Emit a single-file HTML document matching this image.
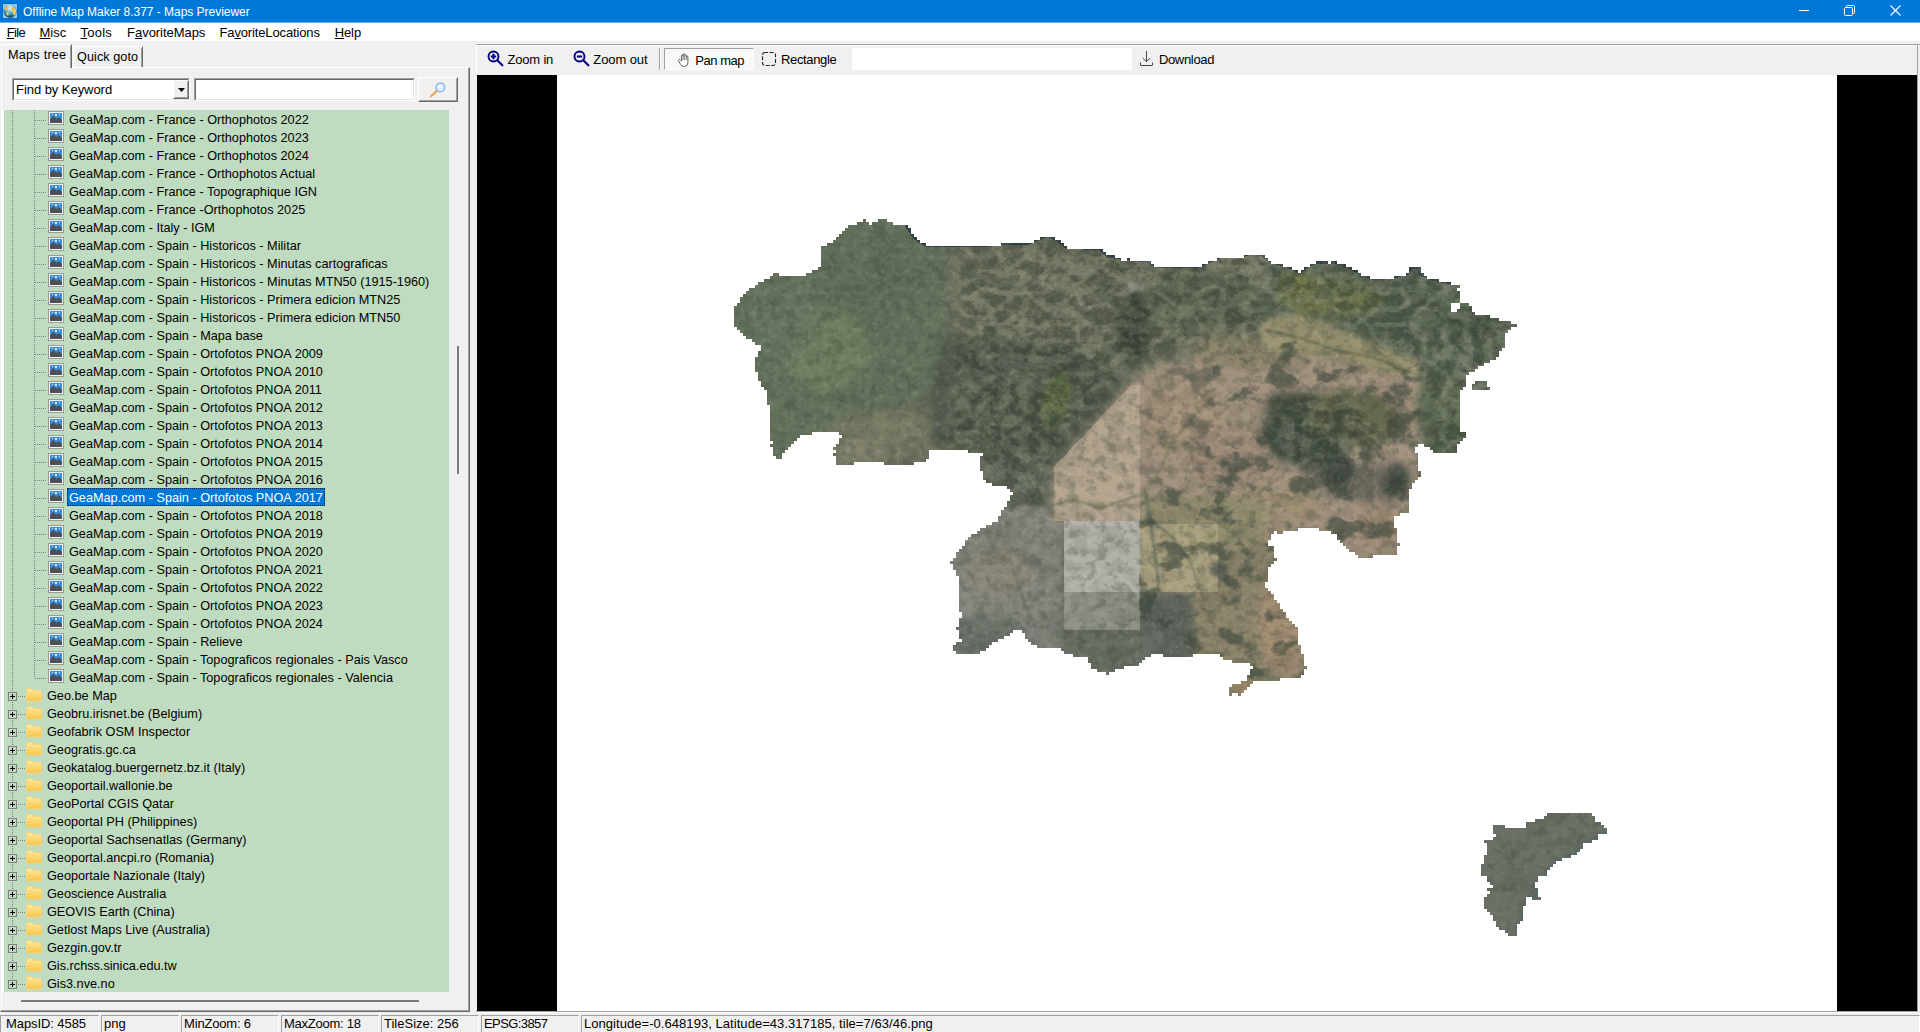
<!DOCTYPE html>
<html><head><meta charset="utf-8"><title>Offline Map Maker 8.377 - Maps Previewer</title>
<style>
*{box-sizing:border-box;margin:0;padding:0}
html,body{width:1920px;height:1032px;overflow:hidden;background:#f0f0f0;font-family:"Liberation Sans", sans-serif;font-size:13px;color:#000}
.abs,.abs *{position:absolute}
#title{position:absolute;left:0;top:0;width:1920px;height:22px;background:#0078d7}
#title .t{position:absolute;left:23px;top:5px;font-size:12px;line-height:14px;color:#fff;white-space:pre;letter-spacing:-0.03px}
#menu{position:absolute;left:0;top:22px;width:1920px;height:19px;background:#fff}
#menu span{position:absolute;top:3px;line-height:15px;font-size:13px;white-space:pre}
#menu u{text-decoration:underline;text-underline-offset:1px}
/* left tabbed pane */
#pane{position:absolute;left:0;top:67px;width:470px;height:945px;border-top:1px solid #fff;border-left:1px solid #f0f0f0;border-right:1px solid #696969;border-bottom:1px solid #696969;background:#f0f0f0}
#pane:before{content:"";position:absolute;left:0;top:0;width:1px;height:100%;background:#fff}
#pane:after{content:"";position:absolute;right:0;top:0;bottom:0;width:1px;background:#a0a0a0}
#paneb{position:absolute;left:1px;top:1010px;width:468px;height:1px;background:#a0a0a0}
.tab{position:absolute;background:#f0f0f0;border-top:1px solid #fff;border-left:1px solid #fff;border-right:1px solid #696969;white-space:pre}
.tab:after{content:"";position:absolute;right:0;top:1px;bottom:0;width:1px;background:#a0a0a0}
.tab span{position:absolute;line-height:15px;font-size:12.7px}
/* inputs */
.sunken{position:absolute;background:#fff;border:1px solid;border-color:#a0a0a0 #fff #fff #a0a0a0}
.sunken:before{content:"";position:absolute;left:0;top:0;right:0;bottom:0;border:1px solid;border-color:#696969 #e3e3e3 #e3e3e3 #696969}
.raised{position:absolute;background:#f0f0f0;border:1px solid;border-color:#fff #696969 #696969 #fff}
.raised:before{content:"";position:absolute;left:0;top:0;right:0;bottom:0;border:1px solid;border-color:#f0f0f0 #a0a0a0 #a0a0a0 #f0f0f0}
/* tree */
#treewrap{position:absolute;left:2px;top:110px;width:447px;height:882px;background:#fff}
#tree{position:absolute;left:4px;top:110px;width:445px;height:882px;background:#c0dcc0}
.row{position:absolute;left:0;width:449px;height:18px}
.row .tx{position:absolute;top:0;height:18px;line-height:21px;font-size:12.7px;white-space:pre;padding:0 2px;margin-left:-2px}
.row .tx.sel{background:#0078d7;color:#fff;outline:1px dotted #0c2238;outline-offset:-1px;padding:0 2px;margin-left:0}
.row .ic{position:absolute}
.hd{position:absolute;top:10px;height:1px;background-image:linear-gradient(90deg,#808080 50%,transparent 50%);background-size:2px 1px}
.vd{position:absolute;width:1px;background-image:linear-gradient(180deg,#808080 50%,transparent 50%);background-size:1px 2px}
.pm{position:absolute;left:8px;top:6px;width:9px;height:9px;border:1px solid #808080;background:#c0dcc0}
.pm:before{content:"";position:absolute;left:1px;top:3px;width:5px;height:1px;background:#000}
.pm:after{content:"";position:absolute;left:3px;top:1px;width:1px;height:5px;background:#000}
/* toolbar */
#tb{position:absolute;left:476px;top:44px;width:1444px;height:30px;border-top:1px solid #a0a0a0;border-left:1px solid #fff;background:#f0f0f0}
#tb:before{content:"";position:absolute;left:0;top:0;right:0;height:1px;background:#fff}
.tbt{position:absolute;top:53px;line-height:15px;font-size:13px;white-space:pre}
/* status bar */
.sp{position:absolute;top:1015px;height:17px;border-top:1px solid #a0a0a0;border-left:1px solid #a0a0a0;border-right:1px solid #fff;font-size:13px;line-height:15px;white-space:pre;padding-left:2px;padding-top:0px;letter-spacing:0.05px}
</style></head>
<body>

<svg width="0" height="0" style="position:absolute">
<defs>
 <linearGradient id="fg" x1="0" y1="0" x2="0" y2="1"><stop offset="0" stop-color="#fdeaa6"/><stop offset="1" stop-color="#f8c545"/></linearGradient>
 <g id="folder">
  <path d="M0.5 1.5 Q0.5 0.5 1.5 0.5 H6 L8 2.5 H14.5 Q15.5 2.5 15.5 3.5 V12 Q15.5 13 14.5 13 H1.5 Q0.5 13 0.5 12 Z" fill="url(#fg)" stroke="#f3d27a" stroke-width="1"/>
  <path d="M8 2.5 L6.5 4.5 H1" fill="none" stroke="#fbd97c" stroke-width="1"/>
 </g>
 <g id="imgic">
  <rect x="0" y="1" width="16" height="14" fill="#f4f4f4"/>
  <rect x="0.5" y="1.5" width="15" height="13" fill="none" stroke="#9a9a9a"/>
  <rect x="2" y="3" width="12" height="10" fill="#3b8edb"/>
  <path d="M2 13 V9 L5.5 6 L8.5 9 L10.5 7 L14 10 V13 Z" fill="#4d5054"/>
  <rect x="4" y="4" width="1" height="1" fill="#cfe6fa"/><rect x="7" y="4" width="2" height="2" fill="#cfe6fa"/><rect x="11" y="4" width="1" height="1" fill="#cfe6fa"/>
 </g>
</defs></svg>

<div id="title"><span class="t">Offline Map Maker 8.377 - Maps Previewer</span>
<svg style="position:absolute;left:2px;top:3px" width="16" height="16" viewBox="0 0 16 16">
 <defs><radialGradient id="gl" cx="50%" cy="28%" r="75%"><stop offset="0" stop-color="#e8f6fb"/><stop offset=".35" stop-color="#7cc3dc"/><stop offset=".8" stop-color="#1f6f8f"/><stop offset="1" stop-color="#174f6c"/></radialGradient></defs>
 <rect x="0" y="0" width="16" height="16" fill="#0d62d0"/>
 <rect x="1" y="1" width="14" height="14" fill="#8ccdf2"/>
 <circle cx="8" cy="8.2" r="6.6" fill="url(#gl)"/>
 <path d="M2.2 5.5 Q3.5 3 6 2.6 Q7.2 3.6 6.2 5 Q5.2 7.2 3.2 7.3 Q2 6.8 2.2 5.5Z" fill="#f3bd57"/>
 <path d="M9.3 5.2 Q11.5 3.6 13.4 5.6 Q14.6 8 13.8 10.8 Q12.6 13 11.6 12.4 Q11.4 10 10.2 8.6 Q9 6.8 9.3 5.2Z" fill="#f6cc5a"/>
 <path d="M10.6 5.6 Q12 5.2 12.6 6.2 L11.2 6.6Z" fill="#8f8a2e"/>
 <path d="M4.2 9.2 Q6.2 9 7 10.8 Q6.6 12.8 5.2 13 Q3.6 11.6 4.2 9.2Z" fill="#e6cf62"/>
 <path d="M6 2.4 Q8.5 1.6 10.4 3.2 Q9 4.4 7.4 4Z" fill="#dfe9c9" opacity=".9"/>
 <path d="M3 11.5 Q5 14.6 8.5 14.7 Q11.5 14.4 13 12 Q10.5 13 8 12.6 Q5.5 13.2 3 11.5Z" fill="#174a63" opacity=".7"/>
</svg>
<svg style="position:absolute;left:1798px;top:0" width="110" height="22" viewBox="0 0 110 22" fill="none" stroke="#fff" stroke-width="1">
 <path d="M1 10.5 H11"/>
 <rect x="46.5" y="7.5" width="8" height="8" rx="1"/>
 <path d="M48.5 7.5 V6.5 Q48.5 5.5 49.5 5.5 H55.5 Q56.5 5.5 56.5 6.5 V12.5 Q56.5 13.5 55.5 13.5 H54.5"/>
 <path d="M92.5 5.5 L102.5 15.5 M102.5 5.5 L92.5 15.5" stroke-width="1.1"/>
</svg>
</div>
<div id="menu"><span style="left:6.8px;letter-spacing:-0.70px"><u>F</u>ile</span><span style="left:39.5px;letter-spacing:0.00px"><u>M</u>isc</span><span style="left:80.5px;letter-spacing:0.22px"><u>T</u>ools</span><span style="left:127.1px;letter-spacing:-0.05px">F<u>a</u>voriteMaps</span><span style="left:219.5px;letter-spacing:-0.14px">Fa<u>v</u>oriteLocations</span><span style="left:334.7px;letter-spacing:-0.10px"><u>H</u>elp</span></div>
<div style="position:absolute;left:0;top:22px;width:1920px;height:1px;background:#6fb3e8"></div>

<!-- left pane -->
<div id="pane"></div>
<div id="paneb"></div>
<div class="tab" style="left:73px;top:46px;width:70px;height:21px"><span style="left:3px;top:3px;letter-spacing:0.05px">Quick goto</span></div>
<div class="tab" style="left:1px;top:44px;width:71px;height:24px;border-left-color:#fff"><span style="left:6px;top:3px;letter-spacing:0.22px">Maps tree</span></div>

<div class="sunken" style="left:12px;top:78px;width:178px;height:23px"></div>
<span style="position:absolute;left:16px;top:82px;line-height:15px;font-size:13px;white-space:pre;letter-spacing:-0.05px">Find by Keyword</span>
<div class="raised" style="left:173px;top:80px;width:16px;height:19px"></div>
<svg style="position:absolute;left:178px;top:88px" width="7" height="4"><path d="M0 0 H7 L3.5 4Z" fill="#000"/></svg>
<div class="sunken" style="left:194px;top:78px;width:221px;height:23px"></div>
<div class="raised" style="left:418px;top:77px;width:40px;height:25px"></div>
<svg style="position:absolute;left:428px;top:80px" width="20" height="20" viewBox="0 0 20 20">
 <path d="M9.2 10.6 L3 16.3" stroke="#e9a45a" stroke-width="2.2" stroke-linecap="round"/>
 <circle cx="12.4" cy="7.4" r="4.3" fill="#d8efff" stroke="#8ab4e8" stroke-width="1.4"/>
 <circle cx="11.5" cy="6.4" r="1.8" fill="#fff" opacity=".8"/>
</svg>

<div id="treewrap"></div>
<div id="tree"></div>
<i class="vd" style="left:12px;top:110px;height:873px"></i>
<i class="vd" style="left:34px;top:110px;height:568px"></i>
<div class="row" style="top:110px"><i class="hd" style="left:35px;width:12px"></i><svg class="ic" style="left:48px;top:0px" width="16" height="15"><use href="#imgic"/></svg><span class="tx" style="left:69px">GeaMap.com - France - Orthophotos 2022</span></div>
<div class="row" style="top:128px"><i class="hd" style="left:35px;width:12px"></i><svg class="ic" style="left:48px;top:0px" width="16" height="15"><use href="#imgic"/></svg><span class="tx" style="left:69px">GeaMap.com - France - Orthophotos 2023</span></div>
<div class="row" style="top:146px"><i class="hd" style="left:35px;width:12px"></i><svg class="ic" style="left:48px;top:0px" width="16" height="15"><use href="#imgic"/></svg><span class="tx" style="left:69px">GeaMap.com - France - Orthophotos 2024</span></div>
<div class="row" style="top:164px"><i class="hd" style="left:35px;width:12px"></i><svg class="ic" style="left:48px;top:0px" width="16" height="15"><use href="#imgic"/></svg><span class="tx" style="left:69px">GeaMap.com - France - Orthophotos Actual</span></div>
<div class="row" style="top:182px"><i class="hd" style="left:35px;width:12px"></i><svg class="ic" style="left:48px;top:0px" width="16" height="15"><use href="#imgic"/></svg><span class="tx" style="left:69px">GeaMap.com - France - Topographique IGN</span></div>
<div class="row" style="top:200px"><i class="hd" style="left:35px;width:12px"></i><svg class="ic" style="left:48px;top:0px" width="16" height="15"><use href="#imgic"/></svg><span class="tx" style="left:69px">GeaMap.com - France -Orthophotos 2025</span></div>
<div class="row" style="top:218px"><i class="hd" style="left:35px;width:12px"></i><svg class="ic" style="left:48px;top:0px" width="16" height="15"><use href="#imgic"/></svg><span class="tx" style="left:69px">GeaMap.com - Italy - IGM</span></div>
<div class="row" style="top:236px"><i class="hd" style="left:35px;width:12px"></i><svg class="ic" style="left:48px;top:0px" width="16" height="15"><use href="#imgic"/></svg><span class="tx" style="left:69px">GeaMap.com - Spain - Historicos - Militar</span></div>
<div class="row" style="top:254px"><i class="hd" style="left:35px;width:12px"></i><svg class="ic" style="left:48px;top:0px" width="16" height="15"><use href="#imgic"/></svg><span class="tx" style="left:69px">GeaMap.com - Spain - Historicos - Minutas cartograficas</span></div>
<div class="row" style="top:272px"><i class="hd" style="left:35px;width:12px"></i><svg class="ic" style="left:48px;top:0px" width="16" height="15"><use href="#imgic"/></svg><span class="tx" style="left:69px">GeaMap.com - Spain - Historicos - Minutas MTN50 (1915-1960)</span></div>
<div class="row" style="top:290px"><i class="hd" style="left:35px;width:12px"></i><svg class="ic" style="left:48px;top:0px" width="16" height="15"><use href="#imgic"/></svg><span class="tx" style="left:69px">GeaMap.com - Spain - Historicos - Primera edicion MTN25</span></div>
<div class="row" style="top:308px"><i class="hd" style="left:35px;width:12px"></i><svg class="ic" style="left:48px;top:0px" width="16" height="15"><use href="#imgic"/></svg><span class="tx" style="left:69px">GeaMap.com - Spain - Historicos - Primera edicion MTN50</span></div>
<div class="row" style="top:326px"><i class="hd" style="left:35px;width:12px"></i><svg class="ic" style="left:48px;top:0px" width="16" height="15"><use href="#imgic"/></svg><span class="tx" style="left:69px">GeaMap.com - Spain - Mapa base</span></div>
<div class="row" style="top:344px"><i class="hd" style="left:35px;width:12px"></i><svg class="ic" style="left:48px;top:0px" width="16" height="15"><use href="#imgic"/></svg><span class="tx" style="left:69px">GeaMap.com - Spain - Ortofotos PNOA 2009</span></div>
<div class="row" style="top:362px"><i class="hd" style="left:35px;width:12px"></i><svg class="ic" style="left:48px;top:0px" width="16" height="15"><use href="#imgic"/></svg><span class="tx" style="left:69px">GeaMap.com - Spain - Ortofotos PNOA 2010</span></div>
<div class="row" style="top:380px"><i class="hd" style="left:35px;width:12px"></i><svg class="ic" style="left:48px;top:0px" width="16" height="15"><use href="#imgic"/></svg><span class="tx" style="left:69px">GeaMap.com - Spain - Ortofotos PNOA 2011</span></div>
<div class="row" style="top:398px"><i class="hd" style="left:35px;width:12px"></i><svg class="ic" style="left:48px;top:0px" width="16" height="15"><use href="#imgic"/></svg><span class="tx" style="left:69px">GeaMap.com - Spain - Ortofotos PNOA 2012</span></div>
<div class="row" style="top:416px"><i class="hd" style="left:35px;width:12px"></i><svg class="ic" style="left:48px;top:0px" width="16" height="15"><use href="#imgic"/></svg><span class="tx" style="left:69px">GeaMap.com - Spain - Ortofotos PNOA 2013</span></div>
<div class="row" style="top:434px"><i class="hd" style="left:35px;width:12px"></i><svg class="ic" style="left:48px;top:0px" width="16" height="15"><use href="#imgic"/></svg><span class="tx" style="left:69px">GeaMap.com - Spain - Ortofotos PNOA 2014</span></div>
<div class="row" style="top:452px"><i class="hd" style="left:35px;width:12px"></i><svg class="ic" style="left:48px;top:0px" width="16" height="15"><use href="#imgic"/></svg><span class="tx" style="left:69px">GeaMap.com - Spain - Ortofotos PNOA 2015</span></div>
<div class="row" style="top:470px"><i class="hd" style="left:35px;width:12px"></i><svg class="ic" style="left:48px;top:0px" width="16" height="15"><use href="#imgic"/></svg><span class="tx" style="left:69px">GeaMap.com - Spain - Ortofotos PNOA 2016</span></div>
<div class="row" style="top:488px"><i class="hd" style="left:35px;width:12px"></i><svg class="ic" style="left:48px;top:0px" width="16" height="15"><use href="#imgic"/></svg><span class="tx sel" style="left:67px">GeaMap.com - Spain - Ortofotos PNOA 2017</span></div>
<div class="row" style="top:506px"><i class="hd" style="left:35px;width:12px"></i><svg class="ic" style="left:48px;top:0px" width="16" height="15"><use href="#imgic"/></svg><span class="tx" style="left:69px">GeaMap.com - Spain - Ortofotos PNOA 2018</span></div>
<div class="row" style="top:524px"><i class="hd" style="left:35px;width:12px"></i><svg class="ic" style="left:48px;top:0px" width="16" height="15"><use href="#imgic"/></svg><span class="tx" style="left:69px">GeaMap.com - Spain - Ortofotos PNOA 2019</span></div>
<div class="row" style="top:542px"><i class="hd" style="left:35px;width:12px"></i><svg class="ic" style="left:48px;top:0px" width="16" height="15"><use href="#imgic"/></svg><span class="tx" style="left:69px">GeaMap.com - Spain - Ortofotos PNOA 2020</span></div>
<div class="row" style="top:560px"><i class="hd" style="left:35px;width:12px"></i><svg class="ic" style="left:48px;top:0px" width="16" height="15"><use href="#imgic"/></svg><span class="tx" style="left:69px">GeaMap.com - Spain - Ortofotos PNOA 2021</span></div>
<div class="row" style="top:578px"><i class="hd" style="left:35px;width:12px"></i><svg class="ic" style="left:48px;top:0px" width="16" height="15"><use href="#imgic"/></svg><span class="tx" style="left:69px">GeaMap.com - Spain - Ortofotos PNOA 2022</span></div>
<div class="row" style="top:596px"><i class="hd" style="left:35px;width:12px"></i><svg class="ic" style="left:48px;top:0px" width="16" height="15"><use href="#imgic"/></svg><span class="tx" style="left:69px">GeaMap.com - Spain - Ortofotos PNOA 2023</span></div>
<div class="row" style="top:614px"><i class="hd" style="left:35px;width:12px"></i><svg class="ic" style="left:48px;top:0px" width="16" height="15"><use href="#imgic"/></svg><span class="tx" style="left:69px">GeaMap.com - Spain - Ortofotos PNOA 2024</span></div>
<div class="row" style="top:632px"><i class="hd" style="left:35px;width:12px"></i><svg class="ic" style="left:48px;top:0px" width="16" height="15"><use href="#imgic"/></svg><span class="tx" style="left:69px">GeaMap.com - Spain - Relieve</span></div>
<div class="row" style="top:650px"><i class="hd" style="left:35px;width:12px"></i><svg class="ic" style="left:48px;top:0px" width="16" height="15"><use href="#imgic"/></svg><span class="tx" style="left:69px">GeaMap.com - Spain - Topograficos regionales - Pais Vasco</span></div>
<div class="row" style="top:668px"><i class="hd" style="left:35px;width:12px"></i><svg class="ic" style="left:48px;top:0px" width="16" height="15"><use href="#imgic"/></svg><span class="tx" style="left:69px">GeaMap.com - Spain - Topograficos regionales - Valencia</span></div>
<div class="row" style="top:686px"><i class="hd" style="left:18px;width:8px"></i><i class="pm"></i><svg class="ic" style="left:26px;top:2px" width="16" height="14"><use href="#folder"/></svg><span class="tx" style="left:47px">Geo.be Map</span></div>
<div class="row" style="top:704px"><i class="hd" style="left:18px;width:8px"></i><i class="pm"></i><svg class="ic" style="left:26px;top:2px" width="16" height="14"><use href="#folder"/></svg><span class="tx" style="left:47px">Geobru.irisnet.be (Belgium)</span></div>
<div class="row" style="top:722px"><i class="hd" style="left:18px;width:8px"></i><i class="pm"></i><svg class="ic" style="left:26px;top:2px" width="16" height="14"><use href="#folder"/></svg><span class="tx" style="left:47px">Geofabrik OSM Inspector</span></div>
<div class="row" style="top:740px"><i class="hd" style="left:18px;width:8px"></i><i class="pm"></i><svg class="ic" style="left:26px;top:2px" width="16" height="14"><use href="#folder"/></svg><span class="tx" style="left:47px">Geogratis.gc.ca</span></div>
<div class="row" style="top:758px"><i class="hd" style="left:18px;width:8px"></i><i class="pm"></i><svg class="ic" style="left:26px;top:2px" width="16" height="14"><use href="#folder"/></svg><span class="tx" style="left:47px">Geokatalog.buergernetz.bz.it (Italy)</span></div>
<div class="row" style="top:776px"><i class="hd" style="left:18px;width:8px"></i><i class="pm"></i><svg class="ic" style="left:26px;top:2px" width="16" height="14"><use href="#folder"/></svg><span class="tx" style="left:47px">Geoportail.wallonie.be</span></div>
<div class="row" style="top:794px"><i class="hd" style="left:18px;width:8px"></i><i class="pm"></i><svg class="ic" style="left:26px;top:2px" width="16" height="14"><use href="#folder"/></svg><span class="tx" style="left:47px">GeoPortal CGIS Qatar</span></div>
<div class="row" style="top:812px"><i class="hd" style="left:18px;width:8px"></i><i class="pm"></i><svg class="ic" style="left:26px;top:2px" width="16" height="14"><use href="#folder"/></svg><span class="tx" style="left:47px">Geoportal PH (Philippines)</span></div>
<div class="row" style="top:830px"><i class="hd" style="left:18px;width:8px"></i><i class="pm"></i><svg class="ic" style="left:26px;top:2px" width="16" height="14"><use href="#folder"/></svg><span class="tx" style="left:47px">Geoportal Sachsenatlas (Germany)</span></div>
<div class="row" style="top:848px"><i class="hd" style="left:18px;width:8px"></i><i class="pm"></i><svg class="ic" style="left:26px;top:2px" width="16" height="14"><use href="#folder"/></svg><span class="tx" style="left:47px">Geoportal.ancpi.ro (Romania)</span></div>
<div class="row" style="top:866px"><i class="hd" style="left:18px;width:8px"></i><i class="pm"></i><svg class="ic" style="left:26px;top:2px" width="16" height="14"><use href="#folder"/></svg><span class="tx" style="left:47px">Geoportale Nazionale (Italy)</span></div>
<div class="row" style="top:884px"><i class="hd" style="left:18px;width:8px"></i><i class="pm"></i><svg class="ic" style="left:26px;top:2px" width="16" height="14"><use href="#folder"/></svg><span class="tx" style="left:47px">Geoscience Australia</span></div>
<div class="row" style="top:902px"><i class="hd" style="left:18px;width:8px"></i><i class="pm"></i><svg class="ic" style="left:26px;top:2px" width="16" height="14"><use href="#folder"/></svg><span class="tx" style="left:47px">GEOVIS Earth (China)</span></div>
<div class="row" style="top:920px"><i class="hd" style="left:18px;width:8px"></i><i class="pm"></i><svg class="ic" style="left:26px;top:2px" width="16" height="14"><use href="#folder"/></svg><span class="tx" style="left:47px">Getlost Maps Live (Australia)</span></div>
<div class="row" style="top:938px"><i class="hd" style="left:18px;width:8px"></i><i class="pm"></i><svg class="ic" style="left:26px;top:2px" width="16" height="14"><use href="#folder"/></svg><span class="tx" style="left:47px">Gezgin.gov.tr</span></div>
<div class="row" style="top:956px"><i class="hd" style="left:18px;width:8px"></i><i class="pm"></i><svg class="ic" style="left:26px;top:2px" width="16" height="14"><use href="#folder"/></svg><span class="tx" style="left:47px">Gis.rchss.sinica.edu.tw</span></div>
<div class="row" style="top:974px"><i class="hd" style="left:18px;width:8px"></i><i class="pm"></i><svg class="ic" style="left:26px;top:2px" width="16" height="14"><use href="#folder"/></svg><span class="tx" style="left:47px">Gis3.nve.no</span></div>
<!-- scrollbars -->
<div style="position:absolute;left:457px;top:346px;width:2px;height:128px;background:#7a7a7a"></div>
<div style="position:absolute;left:21px;top:1000px;width:398px;height:2px;background:#7a7a7a"></div>

<!-- toolbar -->
<div id="tb"></div>

<!-- zoom in -->
<svg style="position:absolute;left:487px;top:50px" width="18" height="18" viewBox="0 0 18 18"><circle cx="6.5" cy="6.5" r="5" fill="none" stroke="#000080" stroke-width="1.9"/><path d="M10.3 10.3 L15.3 15.3" stroke="#000080" stroke-width="2.2" stroke-linecap="round"/><path d="M3.8 6.5 H9.2 M6.5 3.8 V9.2" stroke="#000080" stroke-width="2.1"/></svg>
<!-- zoom out -->
<svg style="position:absolute;left:573px;top:50px" width="18" height="18" viewBox="0 0 18 18"><circle cx="6.5" cy="6.5" r="5" fill="none" stroke="#000080" stroke-width="1.9"/><path d="M10.3 10.3 L15.3 15.3" stroke="#000080" stroke-width="2.2" stroke-linecap="round"/><path d="M3.8 6.5 H9.2" stroke="#000080" stroke-width="2.1"/></svg>
<!-- separator -->
<div style="position:absolute;left:659px;top:48px;width:1px;height:22px;background:#a0a0a0"></div>
<div style="position:absolute;left:660px;top:48px;width:1px;height:22px;background:#fff"></div>
<!-- pan map pressed -->
<div style="position:absolute;left:664px;top:48px;width:90px;height:22px;background:#f8f8f8;border:1px solid;border-color:#a0a0a0 #fff #fff #a0a0a0"></div>
<svg style="position:absolute;left:677px;top:53px" width="14" height="15" viewBox="0 0 14 15"><path d="M4.5 8 V3 Q4.5 2 5.3 2 Q6.1 2 6.1 3 V1.8 Q6.1 0.8 6.9 0.8 Q7.7 0.8 7.7 1.8 V2.6 Q7.7 1.6 8.5 1.6 Q9.3 1.6 9.3 2.6 V3.8 Q9.3 2.9 10.1 2.9 Q10.9 2.9 10.9 3.9 V9.5 Q10.9 13.5 7.6 13.5 H6.8 Q5 13.5 3.8 11.5 L1.6 8 Q1.2 7 2 6.6 Q2.8 6.3 3.4 7.2 Z" fill="#fff" stroke="#555" stroke-width="0.9" stroke-linejoin="round"/><path d="M6.1 3 V7 M7.7 2.6 V7 M9.3 3.8 V7" stroke="#555" stroke-width="0.8" fill="none"/></svg>
<!-- rectangle -->
<svg style="position:absolute;left:761px;top:51px" width="16" height="16" viewBox="0 0 16 16"><rect x="1.5" y="1.5" width="13" height="13" rx="2.5" fill="none" stroke="#222" stroke-width="1.1" stroke-dasharray="4 1.6" stroke-dashoffset="1"/></svg>
<!-- white box -->
<div style="position:absolute;left:852px;top:48px;width:280px;height:22px;background:#fff"></div>
<!-- download -->
<svg style="position:absolute;left:1139px;top:50px" width="16" height="17" viewBox="0 0 16 17"><path d="M7.5 1 V11.5 M3.8 8 L7.5 11.7 L11.2 8" fill="none" stroke="#444" stroke-width="1"/><path d="M1.5 12.5 V15 Q1.5 15.5 2 15.5 H13 Q13.5 15.5 13.5 15 V12.5" fill="none" stroke="#444" stroke-width="1"/></svg>

<span class="tbt" style="left:507.4px;top:52px;letter-spacing:-0.17px">Zoom in</span><span class="tbt" style="left:593.3px;top:52px;letter-spacing:-0.09px">Zoom out</span><span class="tbt" style="left:695.2px;top:53px;letter-spacing:-0.44px">Pan map</span><span class="tbt" style="left:781.1px;top:52px;letter-spacing:-0.37px">Rectangle</span><span class="tbt" style="left:1158.9px;top:52px;letter-spacing:-0.32px">Download</span>

<!-- map view -->
<div style="position:absolute;left:477px;top:75px;width:1440px;height:936px;background:#000"></div>
<div style="position:absolute;left:557px;top:75px;width:1280px;height:936px;background:#fff"></div>
<div style="position:absolute;left:1917px;top:44px;width:1px;height:968px;background:#a0a0a0"></div>
<div style="position:absolute;left:476px;top:1011px;width:1442px;height:1px;background:#a0a0a0"></div>
<div style="position:absolute;left:476px;top:1012px;width:1442px;height:1px;background:#fff"></div>
<svg style="position:absolute;left:557px;top:75px" width="1280" height="936" viewBox="0 0 1280 936" shape-rendering="crispEdges">
<defs>
<clipPath id="land"><rect x="306" y="144" width="3" height="3"/><rect x="321" y="144" width="9" height="3"/><rect x="300" y="147" width="12" height="3"/><rect x="315" y="147" width="21" height="3"/><rect x="291" y="150" width="60" height="3"/><rect x="288" y="153" width="66" height="3"/><rect x="285" y="156" width="69" height="3"/><rect x="282" y="159" width="75" height="3"/><rect x="489" y="159" width="0" height="3"/><rect x="279" y="162" width="81" height="3"/><rect x="483" y="162" width="15" height="3"/><rect x="276" y="165" width="87" height="3"/><rect x="477" y="165" width="27" height="3"/><rect x="267" y="168" width="0" height="3"/><rect x="270" y="168" width="0" height="3"/><rect x="270" y="168" width="99" height="3"/><rect x="444" y="168" width="0" height="3"/><rect x="444" y="168" width="0" height="3"/><rect x="444" y="168" width="0" height="3"/><rect x="444" y="168" width="0" height="3"/><rect x="444" y="168" width="60" height="3"/><rect x="504" y="168" width="3" height="3"/><rect x="264" y="171" width="246" height="3"/><rect x="513" y="171" width="0" height="3"/><rect x="522" y="171" width="0" height="3"/><rect x="264" y="174" width="282" height="3"/><rect x="264" y="177" width="285" height="3"/><rect x="264" y="180" width="294" height="3"/><rect x="684" y="180" width="0" height="3"/><rect x="687" y="180" width="21" height="3"/><rect x="264" y="183" width="300" height="3"/><rect x="564" y="183" width="0" height="3"/><rect x="570" y="183" width="0" height="3"/><rect x="570" y="183" width="3" height="3"/><rect x="660" y="183" width="51" height="3"/><rect x="264" y="186" width="330" height="3"/><rect x="651" y="186" width="63" height="3"/><rect x="756" y="186" width="0" height="3"/><rect x="756" y="186" width="0" height="3"/><rect x="759" y="186" width="0" height="3"/><rect x="759" y="186" width="12" height="3"/><rect x="774" y="186" width="6" height="3"/><rect x="264" y="189" width="333" height="3"/><rect x="645" y="189" width="81" height="3"/><rect x="753" y="189" width="36" height="3"/><rect x="261" y="192" width="474" height="3"/><rect x="747" y="192" width="48" height="3"/><rect x="852" y="192" width="0" height="3"/><rect x="852" y="192" width="3" height="3"/><rect x="855" y="192" width="9" height="3"/><rect x="255" y="195" width="486" height="3"/><rect x="744" y="195" width="57" height="3"/><rect x="852" y="195" width="12" height="3"/><rect x="216" y="198" width="6" height="3"/><rect x="246" y="198" width="0" height="3"/><rect x="249" y="198" width="555" height="3"/><rect x="846" y="198" width="0" height="3"/><rect x="849" y="198" width="18" height="3"/><rect x="210" y="201" width="0" height="3"/><rect x="210" y="201" width="0" height="3"/><rect x="213" y="201" width="600" height="3"/><rect x="837" y="201" width="33" height="3"/><rect x="204" y="204" width="0" height="3"/><rect x="207" y="204" width="672" height="3"/><rect x="879" y="204" width="3" height="3"/><rect x="201" y="207" width="693" height="3"/><rect x="198" y="210" width="702" height="3"/><rect x="900" y="210" width="3" height="3"/><rect x="192" y="213" width="708" height="3"/><rect x="189" y="216" width="714" height="3"/><rect x="186" y="219" width="717" height="3"/><rect x="183" y="222" width="720" height="3"/><rect x="183" y="225" width="720" height="3"/><rect x="180" y="228" width="714" height="3"/><rect x="903" y="228" width="9" height="3"/><rect x="912" y="228" width="0" height="3"/><rect x="177" y="231" width="717" height="3"/><rect x="903" y="231" width="9" height="3"/><rect x="912" y="231" width="3" height="3"/><rect x="177" y="234" width="717" height="3"/><rect x="894" y="234" width="0" height="3"/><rect x="894" y="234" width="0" height="3"/><rect x="900" y="234" width="15" height="3"/><rect x="177" y="237" width="741" height="3"/><rect x="177" y="240" width="750" height="3"/><rect x="927" y="240" width="3" height="3"/><rect x="930" y="240" width="3" height="3"/><rect x="177" y="243" width="765" height="3"/><rect x="177" y="246" width="774" height="3"/><rect x="951" y="246" width="3" height="3"/><rect x="177" y="249" width="783" height="3"/><rect x="180" y="252" width="774" height="3"/><rect x="180" y="255" width="0" height="3"/><rect x="180" y="255" width="0" height="3"/><rect x="183" y="255" width="768" height="3"/><rect x="186" y="258" width="762" height="3"/><rect x="189" y="261" width="759" height="3"/><rect x="195" y="264" width="753" height="3"/><rect x="198" y="267" width="750" height="3"/><rect x="204" y="270" width="744" height="3"/><rect x="201" y="273" width="0" height="3"/><rect x="204" y="273" width="741" height="3"/><rect x="201" y="276" width="741" height="3"/><rect x="201" y="279" width="741" height="3"/><rect x="198" y="282" width="738" height="3"/><rect x="936" y="282" width="3" height="3"/><rect x="198" y="285" width="735" height="3"/><rect x="198" y="288" width="729" height="3"/><rect x="198" y="291" width="723" height="3"/><rect x="198" y="294" width="0" height="3"/><rect x="198" y="294" width="720" height="3"/><rect x="201" y="297" width="711" height="3"/><rect x="912" y="297" width="0" height="3"/><rect x="201" y="300" width="708" height="3"/><rect x="201" y="303" width="708" height="3"/><rect x="204" y="306" width="705" height="3"/><rect x="918" y="306" width="9" height="3"/><rect x="927" y="306" width="0" height="3"/><rect x="927" y="306" width="3" height="3"/><rect x="204" y="309" width="705" height="3"/><rect x="915" y="309" width="15" height="3"/><rect x="207" y="312" width="699" height="3"/><rect x="915" y="312" width="18" height="3"/><rect x="210" y="315" width="693" height="3"/><rect x="210" y="318" width="693" height="3"/><rect x="210" y="321" width="690" height="3"/><rect x="900" y="321" width="3" height="3"/><rect x="210" y="324" width="693" height="3"/><rect x="210" y="327" width="693" height="3"/><rect x="213" y="330" width="690" height="3"/><rect x="213" y="333" width="690" height="3"/><rect x="213" y="336" width="690" height="3"/><rect x="210" y="339" width="0" height="3"/><rect x="213" y="339" width="690" height="3"/><rect x="213" y="342" width="690" height="3"/><rect x="213" y="345" width="690" height="3"/><rect x="213" y="348" width="690" height="3"/><rect x="213" y="351" width="687" height="3"/><rect x="900" y="351" width="3" height="3"/><rect x="213" y="354" width="690" height="3"/><rect x="213" y="357" width="42" height="3"/><rect x="282" y="357" width="627" height="3"/><rect x="213" y="360" width="30" height="3"/><rect x="285" y="360" width="624" height="3"/><rect x="213" y="363" width="27" height="3"/><rect x="282" y="363" width="624" height="3"/><rect x="216" y="366" width="21" height="3"/><rect x="282" y="366" width="621" height="3"/><rect x="213" y="369" width="21" height="3"/><rect x="279" y="369" width="582" height="3"/><rect x="867" y="369" width="33" height="3"/><rect x="216" y="372" width="15" height="3"/><rect x="276" y="372" width="108" height="3"/><rect x="384" y="372" width="474" height="3"/><rect x="873" y="372" width="27" height="3"/><rect x="216" y="375" width="12" height="3"/><rect x="279" y="375" width="93" height="3"/><rect x="405" y="375" width="0" height="3"/><rect x="411" y="375" width="6" height="3"/><rect x="417" y="375" width="441" height="3"/><rect x="876" y="375" width="24" height="3"/><rect x="213" y="378" width="0" height="3"/><rect x="216" y="378" width="9" height="3"/><rect x="225" y="378" width="0" height="3"/><rect x="276" y="378" width="96" height="3"/><rect x="426" y="378" width="435" height="3"/><rect x="219" y="381" width="6" height="3"/><rect x="279" y="381" width="93" height="3"/><rect x="423" y="381" width="0" height="3"/><rect x="423" y="381" width="438" height="3"/><rect x="279" y="384" width="87" height="3"/><rect x="366" y="384" width="0" height="3"/><rect x="366" y="384" width="3" height="3"/><rect x="423" y="384" width="438" height="3"/><rect x="279" y="387" width="18" height="3"/><rect x="297" y="387" width="0" height="3"/><rect x="327" y="387" width="3" height="3"/><rect x="330" y="387" width="27" height="3"/><rect x="423" y="387" width="438" height="3"/><rect x="423" y="390" width="438" height="3"/><rect x="423" y="393" width="438" height="3"/><rect x="423" y="396" width="0" height="3"/><rect x="426" y="396" width="438" height="3"/><rect x="426" y="399" width="438" height="3"/><rect x="426" y="402" width="435" height="3"/><rect x="429" y="405" width="429" height="3"/><rect x="435" y="408" width="0" height="3"/><rect x="435" y="408" width="6" height="3"/><rect x="441" y="408" width="414" height="3"/><rect x="450" y="411" width="405" height="3"/><rect x="453" y="414" width="399" height="3"/><rect x="456" y="417" width="396" height="3"/><rect x="453" y="420" width="399" height="3"/><rect x="453" y="423" width="399" height="3"/><rect x="450" y="426" width="402" height="3"/><rect x="450" y="429" width="402" height="3"/><rect x="447" y="432" width="405" height="3"/><rect x="444" y="435" width="408" height="3"/><rect x="444" y="438" width="393" height="3"/><rect x="837" y="438" width="6" height="3"/><rect x="441" y="441" width="396" height="3"/><rect x="441" y="444" width="396" height="3"/><rect x="435" y="447" width="402" height="3"/><rect x="429" y="450" width="408" height="3"/><rect x="423" y="453" width="318" height="3"/><rect x="741" y="453" width="0" height="3"/><rect x="753" y="453" width="0" height="3"/><rect x="762" y="453" width="0" height="3"/><rect x="762" y="453" width="75" height="3"/><rect x="837" y="453" width="3" height="3"/><rect x="420" y="456" width="297" height="3"/><rect x="717" y="456" width="0" height="3"/><rect x="720" y="456" width="6" height="3"/><rect x="774" y="456" width="66" height="3"/><rect x="414" y="459" width="300" height="3"/><rect x="780" y="459" width="60" height="3"/><rect x="411" y="462" width="303" height="3"/><rect x="780" y="462" width="60" height="3"/><rect x="408" y="465" width="303" height="3"/><rect x="783" y="465" width="57" height="3"/><rect x="408" y="468" width="303" height="3"/><rect x="786" y="468" width="57" height="3"/><rect x="405" y="471" width="312" height="3"/><rect x="789" y="471" width="51" height="3"/><rect x="402" y="474" width="315" height="3"/><rect x="792" y="474" width="48" height="3"/><rect x="399" y="477" width="318" height="3"/><rect x="798" y="477" width="42" height="3"/><rect x="399" y="480" width="318" height="3"/><rect x="801" y="480" width="15" height="3"/><rect x="396" y="483" width="321" height="3"/><rect x="717" y="483" width="3" height="3"/><rect x="393" y="486" width="324" height="3"/><rect x="717" y="486" width="0" height="3"/><rect x="717" y="486" width="0" height="3"/><rect x="396" y="489" width="318" height="3"/><rect x="396" y="492" width="315" height="3"/><rect x="399" y="495" width="312" height="3"/><rect x="399" y="498" width="312" height="3"/><rect x="402" y="501" width="306" height="3"/><rect x="708" y="501" width="3" height="3"/><rect x="402" y="504" width="309" height="3"/><rect x="402" y="507" width="306" height="3"/><rect x="708" y="507" width="0" height="3"/><rect x="402" y="510" width="306" height="3"/><rect x="708" y="510" width="0" height="3"/><rect x="708" y="510" width="0" height="3"/><rect x="402" y="513" width="309" height="3"/><rect x="402" y="516" width="312" height="3"/><rect x="402" y="519" width="315" height="3"/><rect x="402" y="522" width="315" height="3"/><rect x="402" y="525" width="318" height="3"/><rect x="402" y="528" width="321" height="3"/><rect x="402" y="531" width="321" height="3"/><rect x="402" y="534" width="324" height="3"/><rect x="402" y="537" width="0" height="3"/><rect x="405" y="537" width="324" height="3"/><rect x="405" y="540" width="324" height="3"/><rect x="402" y="543" width="330" height="3"/><rect x="402" y="546" width="333" height="3"/><rect x="402" y="549" width="336" height="3"/><rect x="399" y="552" width="342" height="3"/><rect x="402" y="555" width="54" height="3"/><rect x="465" y="555" width="276" height="3"/><rect x="402" y="558" width="51" height="3"/><rect x="468" y="558" width="273" height="3"/><rect x="402" y="561" width="45" height="3"/><rect x="468" y="561" width="273" height="3"/><rect x="402" y="564" width="0" height="3"/><rect x="405" y="564" width="36" height="3"/><rect x="471" y="564" width="270" height="3"/><rect x="741" y="564" width="0" height="3"/><rect x="399" y="567" width="36" height="3"/><rect x="474" y="567" width="267" height="3"/><rect x="396" y="570" width="36" height="3"/><rect x="480" y="570" width="264" height="3"/><rect x="396" y="573" width="33" height="3"/><rect x="504" y="573" width="240" height="3"/><rect x="399" y="576" width="0" height="3"/><rect x="399" y="576" width="12" height="3"/><rect x="411" y="576" width="12" height="3"/><rect x="507" y="576" width="237" height="3"/><rect x="516" y="579" width="78" height="3"/><rect x="597" y="579" width="0" height="3"/><rect x="606" y="579" width="6" height="3"/><rect x="612" y="579" width="24" height="3"/><rect x="663" y="579" width="84" height="3"/><rect x="531" y="582" width="57" height="3"/><rect x="666" y="582" width="81" height="3"/><rect x="531" y="585" width="54" height="3"/><rect x="672" y="585" width="0" height="3"/><rect x="675" y="585" width="72" height="3"/><rect x="534" y="588" width="48" height="3"/><rect x="693" y="588" width="54" height="3"/><rect x="534" y="591" width="33" height="3"/><rect x="696" y="591" width="54" height="3"/><rect x="540" y="594" width="18" height="3"/><rect x="693" y="594" width="54" height="3"/><rect x="549" y="597" width="3" height="3"/><rect x="693" y="597" width="51" height="3"/><rect x="744" y="597" width="3" height="3"/><rect x="690" y="600" width="54" height="3"/><rect x="690" y="603" width="15" height="3"/><rect x="705" y="603" width="15" height="3"/><rect x="720" y="603" width="0" height="3"/><rect x="720" y="603" width="3" height="3"/><rect x="684" y="606" width="12" height="3"/><rect x="675" y="609" width="18" height="3"/><rect x="672" y="612" width="18" height="3"/><rect x="672" y="615" width="15" height="3"/><rect x="672" y="618" width="3" height="3"/><rect x="681" y="618" width="3" height="3"/><rect x="990" y="738" width="45" height="3"/><rect x="987" y="741" width="48" height="3"/><rect x="1035" y="741" width="3" height="3"/><rect x="978" y="744" width="60" height="3"/><rect x="1038" y="744" width="0" height="3"/><rect x="969" y="747" width="75" height="3"/><rect x="936" y="750" width="12" height="3"/><rect x="969" y="750" width="78" height="3"/><rect x="936" y="753" width="114" height="3"/><rect x="936" y="756" width="108" height="3"/><rect x="1044" y="756" width="0" height="3"/><rect x="1044" y="756" width="6" height="3"/><rect x="939" y="759" width="102" height="3"/><rect x="936" y="762" width="105" height="3"/><rect x="927" y="765" width="105" height="3"/><rect x="1032" y="765" width="3" height="3"/><rect x="930" y="768" width="96" height="3"/><rect x="930" y="771" width="96" height="3"/><rect x="930" y="774" width="93" height="3"/><rect x="930" y="777" width="87" height="3"/><rect x="1017" y="777" width="3" height="3"/><rect x="927" y="780" width="0" height="3"/><rect x="927" y="780" width="87" height="3"/><rect x="927" y="783" width="78" height="3"/><rect x="927" y="786" width="72" height="3"/><rect x="924" y="789" width="72" height="3"/><rect x="924" y="792" width="69" height="3"/><rect x="924" y="795" width="66" height="3"/><rect x="924" y="798" width="63" height="3"/><rect x="987" y="798" width="3" height="3"/><rect x="930" y="801" width="51" height="3"/><rect x="930" y="804" width="51" height="3"/><rect x="933" y="807" width="45" height="3"/><rect x="936" y="810" width="42" height="3"/><rect x="930" y="813" width="51" height="3"/><rect x="930" y="816" width="0" height="3"/><rect x="930" y="816" width="0" height="3"/><rect x="933" y="816" width="48" height="3"/><rect x="930" y="819" width="51" height="3"/><rect x="927" y="822" width="42" height="3"/><rect x="975" y="822" width="9" height="3"/><rect x="927" y="825" width="42" height="3"/><rect x="927" y="828" width="42" height="3"/><rect x="927" y="831" width="39" height="3"/><rect x="930" y="834" width="36" height="3"/><rect x="933" y="837" width="33" height="3"/><rect x="936" y="840" width="30" height="3"/><rect x="936" y="843" width="30" height="3"/><rect x="939" y="846" width="24" height="3"/><rect x="939" y="849" width="21" height="3"/><rect x="942" y="852" width="18" height="3"/><rect x="948" y="855" width="12" height="3"/><rect x="951" y="858" width="9" height="3"/></clipPath>
<filter id="bl" color-interpolation-filters="sRGB" x="-20%" y="-20%" width="140%" height="140%"><feGaussianBlur stdDeviation="4.5"/></filter>
<filter id="bl8" color-interpolation-filters="sRGB" x="-20%" y="-20%" width="140%" height="140%"><feGaussianBlur stdDeviation="8"/></filter>
<filter id="blm" color-interpolation-filters="sRGB" x="-20%" y="-20%" width="140%" height="140%"><feGaussianBlur stdDeviation="2.5"/></filter>
<filter id="bl2" color-interpolation-filters="sRGB" x="-20%" y="-20%" width="140%" height="140%"><feGaussianBlur stdDeviation="1.2"/></filter>
<filter id="rdg" x="0" y="0" width="100%" height="100%" color-interpolation-filters="sRGB">
 <feTurbulence type="turbulence" baseFrequency="0.045 0.06" numOctaves="4" seed="12"/>
 <feColorMatrix type="matrix" values="0 0 0 0 0.16  0 0 0 0 0.2  0 0 0 0 0.15  5 0 0 0 -1.15"/>
</filter>
<filter id="rdl" x="0" y="0" width="100%" height="100%" color-interpolation-filters="sRGB">
 <feTurbulence type="turbulence" baseFrequency="0.05 0.065" numOctaves="4" seed="31"/>
 <feColorMatrix type="matrix" values="0 0 0 0 0.62  0 0 0 0 0.64  0 0 0 0 0.5  0 5 0 0 -1.25"/>
</filter>
<filter id="desat" color-interpolation-filters="sRGB" x="0" y="0" width="100%" height="100%"><feColorMatrix type="saturate" values="0.82"/></filter>
<filter id="tex" x="0" y="0" width="100%" height="100%" color-interpolation-filters="sRGB">
 <feTurbulence type="fractalNoise" baseFrequency="0.035 0.045" numOctaves="5" seed="7"/>
 <feColorMatrix type="matrix" values="0 0 0 0 0.22  0 0 0 0 0.27  0 0 0 0 0.22  7 0 0 0 -3.75"/>
</filter>
<filter id="tex3" x="0" y="0" width="100%" height="100%" color-interpolation-filters="sRGB">
 <feTurbulence type="fractalNoise" baseFrequency="0.1 0.11" numOctaves="4" seed="4"/>
 <feColorMatrix type="matrix" values="0 0 0 0 0.24  0 0 0 0 0.29  0 0 0 0 0.24  0 6 0 0 -3.1"/>
</filter>
<filter id="tex2" x="0" y="0" width="100%" height="100%" color-interpolation-filters="sRGB">
 <feTurbulence type="fractalNoise" baseFrequency="0.18 0.19" numOctaves="3" seed="21"/>
 <feColorMatrix type="matrix" values="0 0 0 0 0.88  0 0 0 0 0.87  0 0 0 0 0.8  0 0 6 0 -3.3"/>
</filter>
</defs>
<g clip-path="url(#land)"><g filter="url(#desat)">
 <g filter="url(#bl)"><rect x="143" y="125" width="840" height="520" fill="#69705a" opacity="1"/><polygon points="163.0,125.0 393.0,125.0 391.0,225.0 378.0,305.0 343.0,345.0 273.0,405.0 163.0,405.0" fill="#65755a" /><ellipse cx="323" cy="200" rx="60" ry="40" fill="#617258" opacity="1" transform="rotate(0 323 200)"/><ellipse cx="271" cy="275" rx="42" ry="42" fill="#71825c" opacity="0.85" transform="rotate(0 271 275)"/><ellipse cx="223" cy="245" rx="35" ry="40" fill="#68785f" opacity="0.8" transform="rotate(0 223 245)"/><ellipse cx="338" cy="361" rx="72" ry="26" fill="#7a7c60" opacity="1" transform="rotate(0 338 361)"/><ellipse cx="298" cy="380" rx="30" ry="14" fill="#84836a" opacity="0.8" transform="rotate(0 298 380)"/><polygon points="388.0,161.0 713.0,169.0 713.0,261.0 573.0,277.0 503.0,270.0 388.0,260.0" fill="#72775f" /><ellipse cx="473" cy="215" rx="70" ry="35" fill="#767a62" opacity="0.8" transform="rotate(0 473 215)"/><ellipse cx="643" cy="225" rx="65" ry="35" fill="#626b52" opacity="1" transform="rotate(0 643 225)"/><ellipse cx="576" cy="251" rx="16" ry="40" fill="#414c3c" opacity="1" transform="rotate(0 576 251)"/><ellipse cx="576" cy="214" rx="9" ry="4" fill="#b4b4ac" opacity="0.9" transform="rotate(0 576 214)"/><polygon points="388.0,260.0 503.0,270.0 574.0,305.0 497.0,392.0 492.0,435.0 443.0,430.0 428.0,407.0 423.0,375.0 374.0,373.0 375.0,305.0" fill="#56604f" /><ellipse cx="499" cy="325" rx="13" ry="30" fill="#5f6c40" opacity="1" transform="rotate(15 499 325)"/><ellipse cx="458" cy="405" rx="35" ry="25" fill="#666c5e" opacity="1" transform="rotate(0 458 405)"/><polygon points="574.0,305.0 601.0,287.0 656.0,281.0 708.0,272.0 743.0,277.0 810.0,291.0 863.0,299.0 863.0,405.0 851.0,437.0 840.0,485.0 708.0,485.0 708.0,525.0 582.0,525.0 582.0,446.0 492.0,446.0 492.0,433.0 497.0,392.0" fill="#a6927a" /><ellipse cx="688" cy="277" rx="55" ry="16" fill="#8d8365" opacity="1" transform="rotate(5 688 277)"/><ellipse cx="628" cy="345" rx="40" ry="40" fill="#ab9477" opacity="0.8" transform="rotate(0 628 345)"/><ellipse cx="668" cy="380" rx="40" ry="30" fill="#a38a73" opacity="0.8" transform="rotate(0 668 380)"/><polygon points="705.0,245.0 743.0,239.0 793.0,257.0 862.0,287.0 862.0,302.0 810.0,291.0 743.0,277.0 705.0,272.0" fill="#9a9169" /><ellipse cx="743" cy="261" rx="30" ry="9" fill="#a89c74" opacity="0.9" transform="rotate(10 743 261)"/><ellipse cx="778" cy="273" rx="35" ry="8" fill="#5d6340" opacity="0.8" transform="rotate(12 778 273)"/><ellipse cx="828" cy="287" rx="30" ry="7" fill="#66694a" opacity="0.7" transform="rotate(15 828 287)"/><polygon points="711.0,169.0 983.0,205.0 983.0,387.0 863.0,387.0 863.0,299.0 862.0,287.0 793.0,257.0 743.0,239.0 705.0,245.0" fill="#62705a" /><ellipse cx="773" cy="223" rx="55" ry="20" fill="#6a7342" opacity="0.9" transform="rotate(3 773 223)"/><ellipse cx="738" cy="207" rx="20" ry="10" fill="#73793f" opacity="0.8" transform="rotate(0 738 207)"/><ellipse cx="883" cy="335" rx="25" ry="40" fill="#5d6b4e" opacity="0.8" transform="rotate(0 883 335)"/><ellipse cx="913" cy="245" rx="35" ry="18" fill="#4c5b46" opacity="0.8" transform="rotate(10 913 245)"/><ellipse cx="753" cy="355" rx="48" ry="38" fill="#4a5647" opacity="1" transform="rotate(0 753 355)"/><ellipse cx="798" cy="343" rx="50" ry="27" fill="#626647" opacity="0.95" transform="rotate(8 798 343)"/><ellipse cx="733" cy="330" rx="25" ry="14" fill="#48533f" opacity="0.9" transform="rotate(0 733 330)"/><ellipse cx="801" cy="407" rx="55" ry="18" fill="#6e685c" opacity="0.9" transform="rotate(8 801 407)"/><ellipse cx="781" cy="395" rx="18" ry="12" fill="#3f4a44" opacity="0.9" transform="rotate(0 781 395)"/><ellipse cx="838" cy="403" rx="14" ry="16" fill="#4a5147" opacity="0.8" transform="rotate(0 838 403)"/><ellipse cx="823" cy="453" rx="24" ry="18" fill="#a1886d" opacity="1" transform="rotate(0 823 453)"/><ellipse cx="713" cy="430" rx="50" ry="20" fill="#a4906e" opacity="0.8" transform="rotate(0 713 430)"/><ellipse cx="683" cy="429" rx="10" ry="7" fill="#5a6152" opacity="0.8" transform="rotate(0 683 429)"/><polygon points="582.0,420.0 708.0,425.0 708.0,500.0 582.0,500.0" fill="#938c68" /><polygon points="492.0,433.0 492.0,446.0 507.0,446.0 507.0,615.0 383.0,615.0 383.0,465.0 428.0,425.0" fill="#87887e" /><ellipse cx="443" cy="495" rx="35" ry="25" fill="#8e8875" opacity="0.8" transform="rotate(0 443 495)"/><ellipse cx="428" cy="561" rx="42" ry="20" fill="#6c756a" opacity="1" transform="rotate(0 428 561)"/><ellipse cx="483" cy="565" rx="25" ry="18" fill="#7e8178" opacity="0.8" transform="rotate(0 483 565)"/><rect x="583" y="517" width="52" height="78" fill="#5d655c" opacity="1"/><polygon points="635.0,473.0 715.0,473.0 715.0,525.0 753.0,615.0 663.0,635.0 635.0,585.0" fill="#8e8466" /><ellipse cx="661" cy="495" rx="10" ry="8" fill="#4d564b" opacity="0.8" transform="rotate(0 661 495)"/><ellipse cx="725" cy="557" rx="24" ry="45" fill="#a98e6e" opacity="1" transform="rotate(-12 725 557)"/><ellipse cx="683" cy="610" rx="14" ry="8" fill="#a08862" opacity="1" transform="rotate(0 683 610)"/></g>
 <polygon points="583.0,310.0 574.0,310.0 497.0,392.0 497.0,446.0 583.0,446.0" fill="#bca98e" opacity=".85"/><rect x="507" y="446" width="76" height="71" fill="#c0bdb4" opacity="0.85"/><rect x="507" y="517" width="76" height="38" fill="#a3a39b" opacity="0.7"/><rect x="507" y="555" width="100" height="60" fill="#6a7067" opacity="0.7"/><rect x="583" y="449" width="78" height="68" fill="#b0a47c" opacity="0.85"/>
 <g filter="url(#blm)"><polygon points="705.0,249.0 743.0,243.0 793.0,261.0 862.0,291.0 862.0,302.0 810.0,292.0 743.0,276.0 705.0,271.0" fill="#a0976e" opacity=".75"/><ellipse cx="499" cy="325" rx="11" ry="28" fill="#596a3c" opacity="0.8" transform="rotate(15 499 325)"/><ellipse cx="576" cy="250" rx="10" ry="34" fill="#3e493a" opacity="0.7" transform="rotate(4 576 250)"/><ellipse cx="661" cy="495" rx="9" ry="7" fill="#4a5348" opacity="0.7" transform="rotate(0 661 495)"/><ellipse cx="781" cy="395" rx="16" ry="10" fill="#3c4641" opacity="0.8" transform="rotate(0 781 395)"/><ellipse cx="841" cy="403" rx="10" ry="14" fill="#454d44" opacity="0.7" transform="rotate(0 841 403)"/><ellipse cx="473" cy="485" rx="12" ry="5" fill="#5a5f58" opacity="0.5" transform="rotate(30 473 485)"/></g>
 <g filter="url(#bl2)"><polyline points="495.0,430.0 518.0,425.0 543.0,433.0 568.0,425.0 589.0,418.0 603.0,395.0 615.0,367.0 638.0,340.0 658.0,320.0" fill="none" stroke="#5c6a48" stroke-width="2.2" opacity="0.55" stroke-linecap="round" stroke-linejoin="round"/><polyline points="589.0,418.0 593.0,445.0 599.0,485.0 603.0,525.0" fill="none" stroke="#566152" stroke-width="3" opacity="0.6" stroke-linecap="round" stroke-linejoin="round"/><polyline points="593.0,445.0 613.0,460.0 633.0,485.0 643.0,515.0" fill="none" stroke="#59624f" stroke-width="2.5" opacity="0.55" stroke-linecap="round" stroke-linejoin="round"/><polyline points="603.0,425.0 628.0,430.0 658.0,445.0 683.0,465.0" fill="none" stroke="#5c6450" stroke-width="2.5" opacity="0.5" stroke-linecap="round" stroke-linejoin="round"/><polyline points="574.0,255.0 563.0,295.0 543.0,335.0 518.0,375.0" fill="none" stroke="#566048" stroke-width="2" opacity="0.45" stroke-linecap="round" stroke-linejoin="round"/><polyline points="593.0,275.0 603.0,315.0 613.0,355.0" fill="none" stroke="#6a6a50" stroke-width="1.6" opacity="0.45" stroke-linecap="round" stroke-linejoin="round"/><polyline points="708.0,255.0 743.0,263.0 778.0,275.0 818.0,283.0 853.0,297.0" fill="none" stroke="#4f5a3c" stroke-width="2.2" opacity="0.6" stroke-linecap="round" stroke-linejoin="round"/><polyline points="453.0,485.0 463.0,515.0 473.0,540.0 483.0,565.0" fill="none" stroke="#4e564c" stroke-width="1.6" opacity="0.5" stroke-linecap="round" stroke-linejoin="round"/></g>
 <polyline points="350.0,150.0 358.0,162.0 369.0,169.0 388.0,170.0 434.0,169.0 453.0,167.0 472.0,167.0 483.0,162.0 491.0,159.0 502.0,165.0 509.0,171.0 543.0,173.0 551.0,180.0 563.0,182.0 590.0,185.0 598.0,190.0 642.0,190.0 650.0,186.0 663.0,181.0 685.0,180.0 693.0,177.0 704.0,178.0 715.0,186.0 731.0,190.0 742.0,196.0 750.0,190.0 758.0,186.0 780.0,186.0 794.0,192.0 807.0,199.0 818.0,203.0 837.0,201.0 851.0,197.0 852.0,192.0 863.0,191.0 864.0,199.0 880.0,204.0 901.0,208.0" fill="none" stroke="#23384a" stroke-width="5" opacity=".85" stroke-linejoin="round"/>
 <mask id="mtnm" maskUnits="userSpaceOnUse" x="0" y="0" width="1280" height="936"><g filter="url(#bl8)"><polygon fill="#fff" points="403.0,161.0 713.0,169.0 983.0,205.0 983.0,387.0 873.0,387.0 871.0,305.0 793.0,251.0 743.0,233.0 705.0,239.0 708.0,265.0 656.0,275.0 601.0,281.0 568.0,299.0 491.0,387.0 486.0,435.0 443.0,430.0 428.0,407.0 423.0,375.0 388.0,373.0 393.0,305.0 403.0,260.0"/><ellipse fill="#fff" cx="768" cy="357" rx="58" ry="38"/></g></mask>
 <g mask="url(#mtnm)"><rect x="140" y="120" width="850" height="530" filter="url(#rdg)" opacity=".34"/><rect x="140" y="120" width="850" height="530" filter="url(#rdl)" opacity=".26"/></g>
 <rect x="140" y="120" width="850" height="530" filter="url(#rdg)" opacity=".1"/>
 <clipPath id="dry"><polygon points="656.0,281.0 708.0,272.0 743.0,265.0 810.0,285.0 863.0,299.0 863.0,405.0 851.0,437.0 840.0,485.0 753.0,485.0 753.0,625.0 582.0,625.0 582.0,446.0 582.0,417.0 643.0,395.0 656.0,345.0"/></clipPath>
 <clipPath id="dryw"><polygon points="582.0,310.0 601.0,287.0 656.0,281.0 656.0,345.0 643.0,395.0 582.0,417.0"/></clipPath>
 <g clip-path="url(#dry)"><rect x="140" y="120" width="850" height="530" filter="url(#tex)" opacity=".55"/></g>
 <g clip-path="url(#dryw)"><rect x="140" y="120" width="850" height="530" filter="url(#tex)" opacity=".28"/></g>
 <rect x="140" y="120" width="850" height="530" filter="url(#tex)" opacity=".13"/>
 <rect x="140" y="120" width="850" height="530" filter="url(#tex3)" opacity=".24"/>
 <rect x="140" y="120" width="850" height="530" filter="url(#tex2)" opacity=".09"/>
 <rect x="900" y="720" width="160" height="150" fill="#6a7064"/>
 <polyline points="1049.0,755.0 1033.0,767.0 1014.0,780.0 996.0,789.0 988.0,799.0 979.0,809.0 980.0,822.0 969.0,824.0 965.0,847.0 959.0,859.0" fill="none" stroke="#4f6a66" stroke-width="4" opacity=".55"/>
 <rect x="900" y="720" width="160" height="150" filter="url(#tex)" opacity=".15"/>
 <rect x="900" y="720" width="160" height="150" filter="url(#tex3)" opacity=".25"/>
 <rect x="900" y="720" width="160" height="150" filter="url(#tex2)" opacity=".05"/>
</g></g>
</svg>
<!-- status bar -->
<div class="sp" style="left:0px;width:99px;padding-left:5px;letter-spacing:-0.08px">MapsID: 4585</div><div class="sp" style="left:101px;width:78px;padding-left:2px;letter-spacing:0px">png</div><div class="sp" style="left:181px;width:98px;padding-left:2px;letter-spacing:-0.17px">MinZoom: 6</div><div class="sp" style="left:281px;width:98px;padding-left:2px;letter-spacing:-0.26px">MaxZoom: 18</div><div class="sp" style="left:381px;width:98px;padding-left:2px;letter-spacing:0px">TileSize: 256</div><div class="sp" style="left:481px;width:98px;padding-left:2px;letter-spacing:-0.59px">EPSG:3857</div><div class="sp" style="left:581px;width:1339px;padding-left:2px;letter-spacing:0.05px">Longitude=-0.648193, Latitude=43.317185, tile=7/63/46.png</div>
</body></html>
